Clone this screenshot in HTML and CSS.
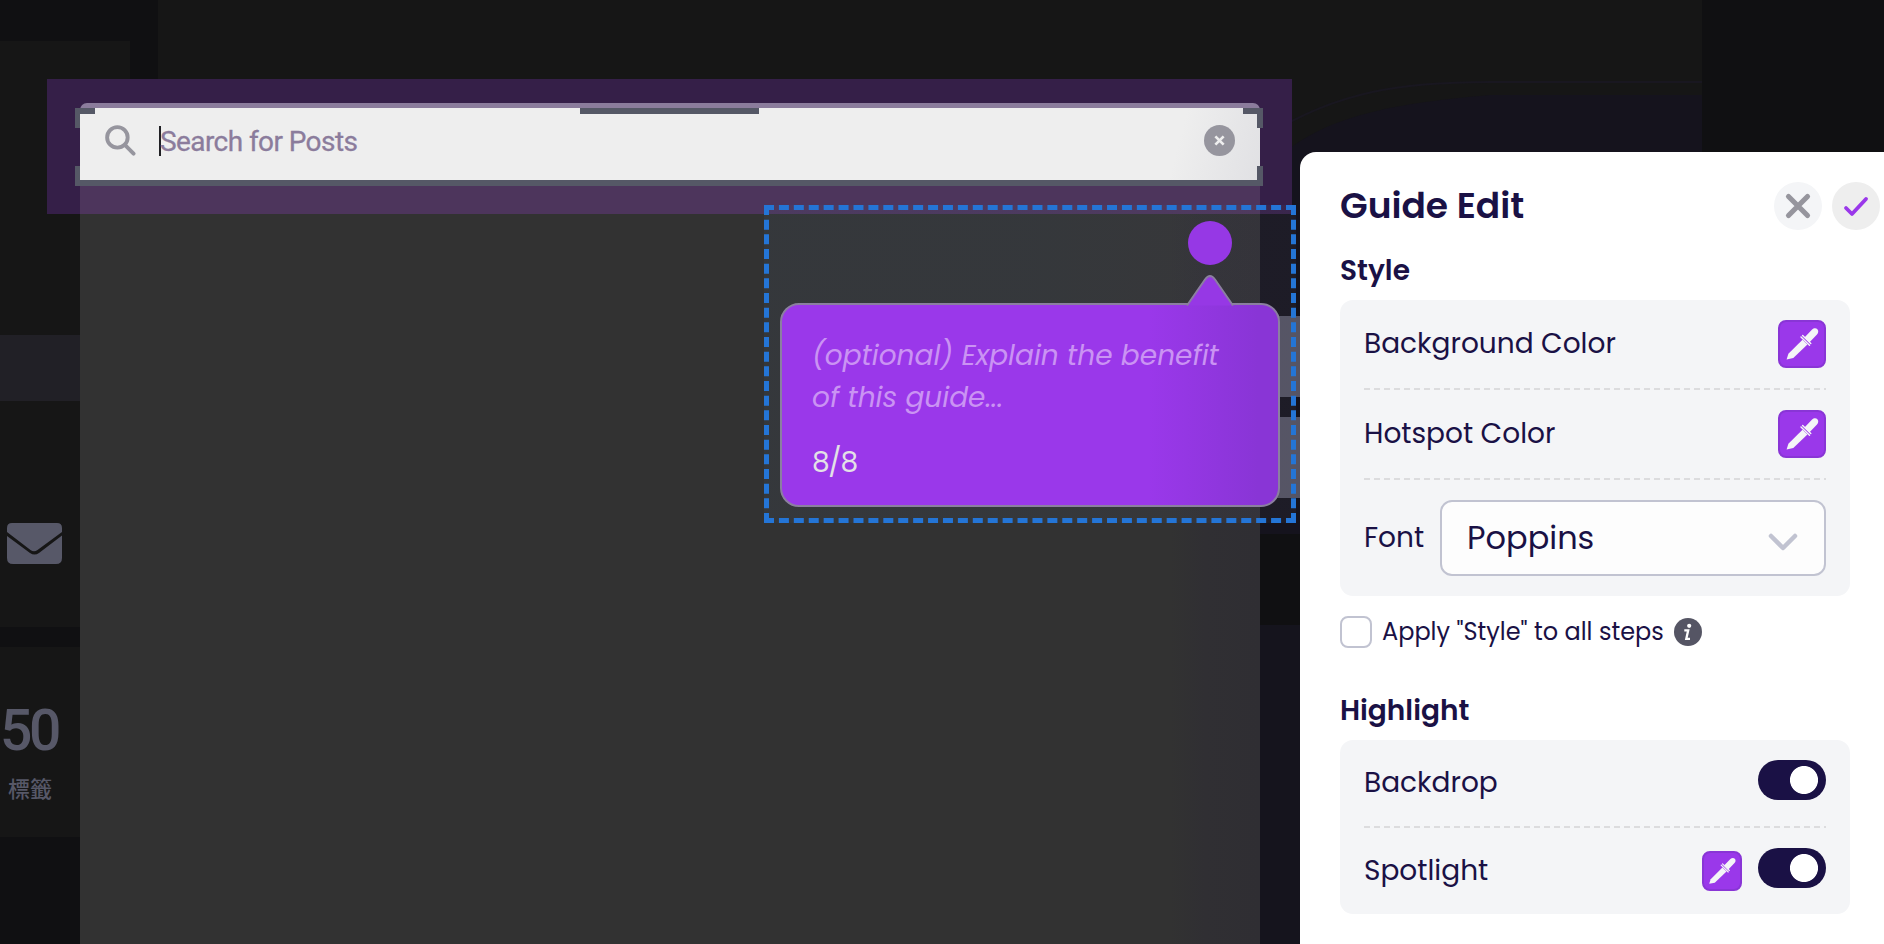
FILE: index.html
```html
<!DOCTYPE html>
<html lang="en">
<head>
<meta charset="utf-8">
<title>Guide Edit</title>
<link rel="stylesheet" href="styles.css">
</head>
<body>
<svg class="defs" aria-hidden="true">
  <symbol id="dropper" viewBox="0 0 48 48">
    <path fill="#f4f5f7" d="M8.600 39.400l1.800-5.600L24.500 19.700l4.900 4.900L15.300 38.100z"/>
    <path fill="#f4f5f7" d="M26.500 17.500l7.600-7.900c1.600-1.700 4-1.700 5.300-.4 1.300 1.400 1.100 3.700-.4 5.300l-7.700 7.900z"/>
    <path stroke="#f4f5f7" stroke-width="1.400" stroke-linecap="round" d="M23 17l8.500 8.200M24.600 15.400l8.200 8"/>
  </symbol>
</svg>

<div class="site">
  <div class="side">
    <div class="side-card first">
      <div class="strip"></div>
      <svg class="mail" viewBox="0 0 55 41"><path d="M5 0h45q5 0 5 5v4L30.500 27q-3.500 2.500-7 0L0 9V5q0-5 5-5zM0 13L23 30q4.500 3.200 9 0L55 12.500V35q0 6-6 6H6q-6 0-6-6z"/></svg>
    </div>
    <div class="side-card stats">
      <div class="num">50</div>
      <div class="label">標籤</div>
    </div>
  </div>
  <div class="main">
    <svg class="blob" viewBox="0 0 442 439"><path fill="#15131d" d="M0 439V80C50 25 115 10 230 0H442V439z"/><path class="ring" d="M0 45C75-5 145-13 230-13H442"/></svg>
    <div class="gap-block"></div>
    <div class="low-block"></div>
  </div>
  <div class="edge"></div>
</div>

<div class="modal"></div>
<div class="ghosts"><i></i><i></i></div>
<div class="spot"></div>
<div class="modal-cap"></div>

<div class="search">
  <svg class="lens" viewBox="0 0 32 32"><circle cx="12.800" cy="12.800" r="10.600"/><path d="M20.500 20.500l9 9"/></svg>
  <span class="caret"></span><span class="placeholder">Search for Posts</span>
  <svg class="clear" viewBox="0 0 30 30"><circle cx="15" cy="15" r="15"/><path d="M11 11l8 8M19 11l-8 8"/></svg>
</div>
<svg class="handles" viewBox="0 0 1188 78">
  <path d="M0 0H20V6H5V20H0zM505 0H684V6H505zM1168 0H1188V20H1182V6H1168zM0 58H5V72H1182V58H1188V78H0z"/>
</svg>

<div class="guide">
  <svg class="frame" viewBox="0 0 532 318">
    <path class="fr-h" d="M0 2.500H532M0 315.500H532"/>
    <path class="fr-v" d="M2.500 0V318M529.500 0V318"/>
  </svg>
  <svg class="pointer" viewBox="0 0 50 44"><circle cx="25" cy="22" r="22"/></svg>
  <div class="bubble">
    <p class="hint">(optional) Explain the benefit<br>of this guide...</p>
    <p class="count">8/8</p>
  </div>
  <svg class="pointer top" viewBox="0 0 50 34">
    <path d="M3 30L20 6Q25-1 30 6L47 30V31.500H3z"/>
    <path class="line" d="M2 31.500L20 5.500Q25-1.500 30 5.500L48 31.500"/>
  </svg>
</div>

<aside class="panel">
  <header class="head">
    <h1>Guide Edit</h1>
    <button class="round"><svg viewBox="0 0 48 48"><path stroke="#96959d" stroke-width="5.200" d="M14.500 14.500l19 19M33.500 14.500l-19 19"/></svg></button>
    <button class="round ok"><svg viewBox="0 0 48 48"><path stroke="#9a38ea" stroke-width="3.800" d="M14 26l6 6L34 17"/></svg></button>
  </header>
  <h2>Style</h2>
  <section class="card">
    <div class="row"><span>Background Color</span><i class="swatch"><svg><use href="#dropper"/></svg></i></div>
    <div class="row"><span>Hotspot Color</span><i class="swatch"><svg><use href="#dropper"/></svg></i></div>
    <div class="row font"><span class="t-font">Font</span>
      <div class="select"><span>Poppins</span><svg viewBox="0 0 30 20"><path d="M3 3l12 12L27 3"/></svg></div>
    </div>
  </section>
  <div class="apply"><i class="box"></i><span>Apply "Style" to all steps</span>
    <svg class="info" viewBox="0 0 28 28"><circle cx="14" cy="14" r="14" fill="#555564"/><circle cx="15.200" cy="7.800" r="2.100" fill="#fff"/><path d="M10.300 12.300h3.900l-1.900 8.500h3.700" fill="none" stroke="#fff" stroke-width="2.300"/></svg>
  </div>
  <h2 class="t-high">Highlight</h2>
  <section class="card second">
    <div class="row"><span>Backdrop</span><i class="toggle"></i></div>
    <div class="row"><span>Spotlight</span><i class="swatch small"><svg><use href="#dropper"/></svg></i><i class="toggle"></i></div>
  </section>
</aside>
</body>
</html>
```
FILE: styles.css
```css
* { box-sizing: border-box; }
body {
  margin: 0; width: 1884px; height: 944px; position: relative; overflow: hidden;
  background: #101012; color: #1a1145;
  font-family: Poppins, Inter, "Noto Sans", sans-serif;
}
h1, h2, p { margin: 0; }
.defs { position: absolute; width: 0; height: 0; }

/* dimmed site behind the guide */
.site { display: grid; grid-template-columns: 158px 1544px 182px; height: 944px; }
.side { padding-top: 41px; display: flex; flex-direction: column; gap: 20px; }
.side-card { width: 130px; background: #161616; }
.first { height: 586px; padding-top: 294px; }
.strip { height: 66px; background: #212026; }
.mail { display: block; width: 55px; height: 41px; margin: 122px 0 0 7px; fill: #575868; }
.stats { height: 190px; padding-top: 54px; color: #575868; }
.num { font: 500 57px/60px Roboto, sans-serif; letter-spacing: -3.500px; }
.label { font: 500 22px/32px "Noto Sans CJK TC", sans-serif; padding-left: 8px; margin-top: 10px; }
.main { background: #161616; display: flex; flex-direction: column; align-items: flex-end; padding-top: 95px; }
.blob { width: 442px; height: 439px; overflow: visible; flex: none; }
.ring { fill: none; stroke: #191720; stroke-width: 2; }
.gap-block { width: 442px; height: 91px; background: #101012; }
.low-block { width: 442px; flex: 1; background: #15141d; }

.modal {
  position: absolute; left: 80px; top: 103px; width: 1180px; height: 841px;
  border-radius: 7px 7px 0 0;
  background: linear-gradient(90deg, #323232 1090px, #302f33 1125px, #2f2e33);
}
.ghosts { position: absolute; left: 1260px; top: 316px; display: grid; gap: 20px; }
.ghosts i { width: 40px; height: 81px; background: #555464; }
.spot {
  position: absolute; left: 47px; top: 79px; width: 1245px; height: 135px;
  background: linear-gradient(#4d355c, #4d355c) 33px 106px / 1180px 29px no-repeat, #351f48;
}
.modal-cap { position: absolute; left: 80px; top: 103px; width: 1180px; height: 12px; border-radius: 7px 7px 0 0; background: #8b7c9c; }

.search {
  position: absolute; left: 80px; top: 108px; width: 1180px; height: 73px;
  background: linear-gradient(105deg, #eee 1070px, #dcdce0 1190px);
  border-bottom: 1px solid #bbb; display: flex; align-items: center; padding: 0 25px 7px 25px;
}
.lens { width: 31px; height: 31px; fill: none; stroke: #96959e; stroke-width: 4; stroke-linecap: round; }
.caret { width: 2px; height: 30px; background: #202024; margin-left: 23px; }
.placeholder { flex: 1; font: 400 28px/32px Roboto, sans-serif; letter-spacing: -.58px; color: #8b7c9c; -webkit-text-stroke: .3px #8b7c9c; margin: 3px 0 0 -1px; }
.clear { width: 31px; height: 31px; fill: #96959e; }
.clear path { stroke: #eee; stroke-width: 2.600; }
.handles { position: absolute; left: 75px; top: 108px; width: 1188px; height: 78px; fill: #555866; }

/* guide bubble */
.guide {
  position: absolute; left: 764px; top: 205px; width: 532px; height: 318px; padding: 98px 16px 0;
  background: linear-gradient(90deg, rgba(72, 94, 122, .13) 50%, rgba(92, 92, 110, .12) 92%);
}
.frame { position: absolute; inset: 0; fill: none; stroke: #2475d6; stroke-width: 5; }
.fr-h { stroke-dasharray: 10 4.914; }
.fr-v { stroke-dasharray: 10 4.667; }
.pointer { position: absolute; left: 421px; top: 16px; width: 50px; height: 44px; fill: #9638e5; }
.pointer.top { top: 69px; height: 34px; }
.pointer .line { fill: none; stroke: #8b7fa0; stroke-width: 2; }
.bubble {
  height: 204px; padding: 30px 30px 0; border: 2px solid #8b7fa0; border-radius: 19px;
  background: linear-gradient(90deg, #9a38ea 74%, #8935d6 96%); color: #e3e1e6;
}
.hint { font-style: italic; font-size: 28px; line-height: 42px; color: #ca93f3; white-space: nowrap; }
.count { font-size: 28px; line-height: 42px; margin-top: 23px; letter-spacing: -1.300px; }

/* editor panel */
.panel { position: absolute; left: 1300px; top: 152px; width: 584px; height: 792px; padding: 30px 4px 0 40px; background: #fff; border-radius: 16px 0 0 0; }
.head { display: flex; align-items: center; gap: 10px; height: 48px; }
h1 { flex: 1; font-size: 36px; font-weight: 600; line-height: 48px; white-space: nowrap; }
.round { width: 48px; height: 48px; border: 0; padding: 0; border-radius: 50%; background: #f4f5f7; }
.ok { background: #eee; }
.round svg { display: block; width: 48px; height: 48px; fill: none; stroke-linecap: round; stroke-linejoin: round; }
h2 { font-size: 28px; font-weight: 600; line-height: 42px; margin-top: 20px; height: 50px; }
.card { width: 510px; height: 296px; padding: 0 24px; background: #f4f5f7; border-radius: 13px; }
.row { display: flex; align-items: center; height: 90px; padding-bottom: 2px; font-size: 28px; white-space: nowrap; background: repeating-linear-gradient(90deg, #dcdcde 0 6px, transparent 6px 10px) bottom / 100% 2px no-repeat; }
.row:last-child { background: none; }
.row > span { flex: 1; }
.row .t-font { flex: none; width: 76px; }
.row.font { height: 116px; padding-bottom: 0; }
.swatch { width: 48px; height: 48px; border: 2px solid #8935d6; border-radius: 8px; background: #9a38ea; }
.swatch svg { display: block; width: 48px; height: 48px; margin: -2px; }
.swatch.small { width: 40px; height: 40px; margin: 6px 16px 0 0; }
.small svg { width: 40px; height: 40px; }
.select { width: 386px; height: 76px; border: 2px solid #c1c3d1; border-radius: 12px; background: #fdfdfd; display: flex; align-items: center; justify-content: space-between; padding: 0 26px 0 25px; font-size: 32px; }
.select svg { width: 30px; height: 20px; margin-top: 10px; fill: none; stroke: #c1c3d1; stroke-width: 4.500; stroke-linecap: round; stroke-linejoin: round; }
.apply { display: flex; align-items: center; height: 32px; margin-top: 20px; font-size: 24px; white-space: nowrap; }
.box { width: 32px; height: 32px; border: 2px solid #c1c3d1; border-radius: 8px; margin-right: 10px; }
.apply span { width: 292px; padding-bottom: 1px; }
.info { width: 28px; height: 28px; }
.t-high { margin-top: 42px; }
.second { height: 174px; }
.second .row { height: 88px; padding-bottom: 8px; }
.second .row:last-child { height: 80px; padding: 0; }
.second .row > span { padding-top: 5px; }
.toggle { width: 68px; height: 40px; border-radius: 20px; background: radial-gradient(circle at 46px 20px, #fff 13.600px, #1a1145 14.400px); }
```
